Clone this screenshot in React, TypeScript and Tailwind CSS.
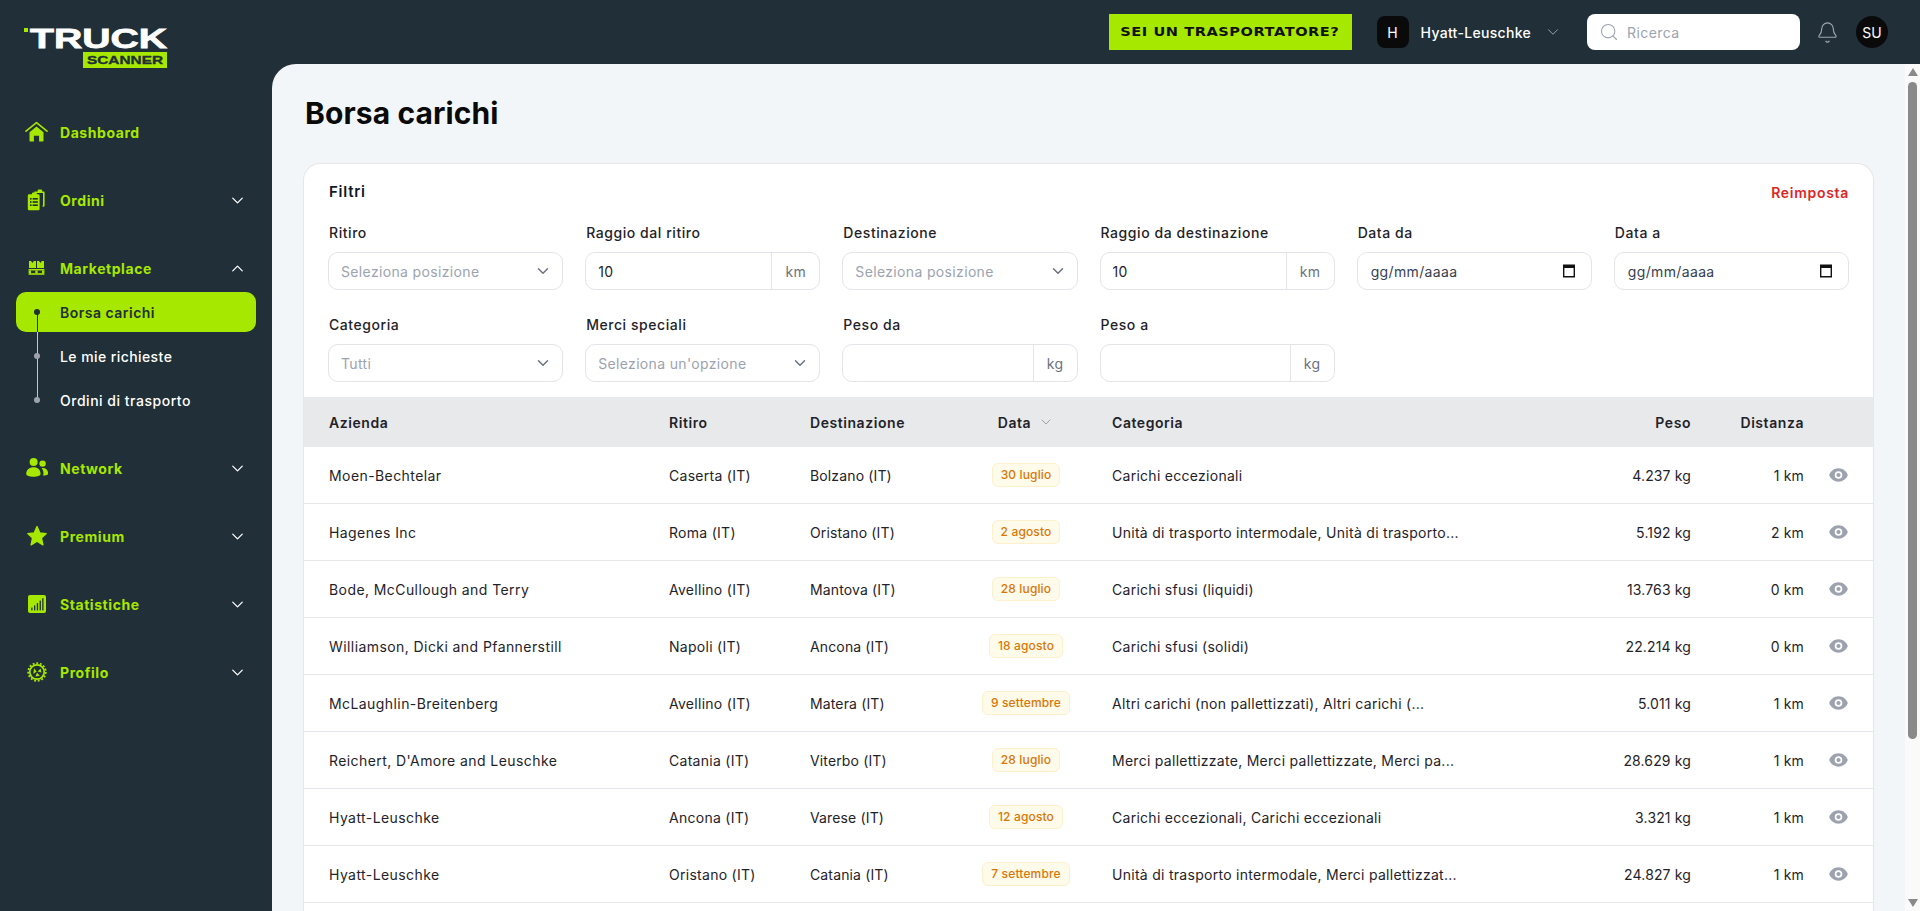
import React from "react";
import { ChevronDown, ChevronUp, Search, Bell } from "lucide-react";

const Lime = "#a6e800";

function HomeIcon() {
  return (
    <svg viewBox="0 0 24 24" className="w-[24px] h-[24px]" fill={Lime}>
      <path d="M2 11.2 12.5 2.6 23 11.2" fill="none" stroke={Lime} strokeWidth="1.6" strokeLinecap="round" strokeLinejoin="round" />
      <path d="M5.5 12.2 12.5 6.4l7 5.8v8.2a1.2 1.2 0 0 1-1.2 1.2H15.1v-5.8H9.9v5.8H6.7a1.2 1.2 0 0 1-1.2-1.2z" />
    </svg>
  );
}
function OrdersIcon() {
  return (
    <svg viewBox="0 0 24 24" className="w-[24px] h-[24px]" fill={Lime}>
      <path d="M10.4 3.4h3.2V2.6a1 1 0 0 1 1-1h2.6a1 1 0 0 1 1 1v.8h1.4a1 1 0 0 1 1 1v13.4a1 1 0 0 1-1 1h-1v-1.6h.4V5H10.4z" />
      <path d="M5 6.2h3V5.4a1 1 0 0 1 1-1h2.8a1 1 0 0 1 1 1v.8h1.6a1.2 1.2 0 0 1 1.2 1.2v13.6a1.2 1.2 0 0 1-1.2 1.2H5a1.2 1.2 0 0 1-1.2-1.2V7.4A1.2 1.2 0 0 1 5 6.2z" />
      <g fill="#202f38">
        <rect x="6" y="10" width="1.6" height="1.6" />
        <rect x="8.6" y="10" width="5.2" height="1.6" />
        <rect x="6" y="13.2" width="1.6" height="1.6" />
        <rect x="8.6" y="13.2" width="5.2" height="1.6" />
        <rect x="6" y="16.4" width="1.6" height="1.6" />
        <rect x="8.6" y="16.4" width="5.2" height="1.6" />
      </g>
    </svg>
  );
}
function PalletIcon() {
  return (
    <svg viewBox="0 0 24 24" className="w-[24px] h-[24px]" fill={Lime}>
      <path d="M5 5h2l1.4 2L9.8 5H12v7H5z" />
      <path d="M13 5h2l1.4 2L17.8 5H20v7h-7z" />
      <rect x="4.6" y="13" width="15.8" height="1.5" />
      <rect x="4.6" y="17.2" width="15.8" height="1.6" />
      <rect x="4.6" y="14.5" width="2.4" height="2.7" />
      <rect x="11.3" y="14.5" width="2.4" height="2.7" />
      <rect x="18" y="14.5" width="2.4" height="2.7" />
    </svg>
  );
}
function UsersIcon() {
  return (
    <svg viewBox="0 0 24 24" className="w-[24px] h-[24px]" fill={Lime}>
      <circle cx="9.6" cy="6" r="4" />
      <circle cx="18.6" cy="7.6" r="3.2" />
      <path d="M2.2 17.8c0-4 3.2-6.6 7.4-6.6s7 2.6 7 6.6c0 2-3 3-7.2 3s-7.2-1-7.2-3z" />
      <path d="M17.6 12.2c3.6-.8 6.4 1.6 6.6 5.2.1 1.4-2 2-5.4 2 .5-.6.7-1.2.7-2 0-2-.7-3.8-1.9-5.2z" />
    </svg>
  );
}
function StarIcon() {
  return (
    <svg viewBox="0 0 24 24" className="w-[24px] h-[24px]" fill={Lime} stroke={Lime} strokeWidth="1.4" strokeLinejoin="round">
      <path d="m13 2.6 2.8 6.4 6.4.6-4.8 4.4 1.5 6.8-5.9-3.6-5.9 3.6 1.5-6.8-4.8-4.4 6.4-.6z" />
    </svg>
  );
}
function StatsIcon() {
  return (
    <svg viewBox="0 0 24 24" className="w-[24px] h-[24px]">
      <rect x="4" y="3" width="18" height="18" rx="2" fill={Lime} />
      <g fill="#202f38">
        <rect x="7.2" y="15.6" width="1.3" height="2.8" />
        <rect x="10" y="13.4" width="1.3" height="5" />
        <rect x="12.8" y="11" width="1.3" height="7.4" />
        <rect x="15.6" y="8.6" width="1.3" height="9.8" />
        <rect x="18.2" y="6.2" width="1.3" height="12.2" />
      </g>
    </svg>
  );
}
function GearIcon() {
  return (
    <svg viewBox="0 0 24 24" className="w-[24px] h-[24px]" fill="none" stroke={Lime}>
      <circle cx="13" cy="12" r="8.8" strokeWidth="1.8" strokeDasharray="1.9 1.78" />
      <circle cx="13" cy="12" r="7.2" strokeWidth="1.7" />
      <path d="M10 8.2 12.6 11.6 9.4 14zM13.6 11.4 16.6 8.4 17.4 12.6zM13 12.8 15.8 15.8 11.4 16.4z" fill={Lime} stroke="none" />
    </svg>
  );
}
function CalIcon() {
  return (
    <svg viewBox="0 0 14 14" className="w-[14px] h-[14px]">
      <path d="M1.7 1.2h10.6v11.6H1.7z" fill="none" stroke="#111" strokeWidth="1.4" />
      <rect x="1" y="1" width="12" height="3" fill="#111" />
    </svg>
  );
}
function EyeIcon() {
  return (
    <svg viewBox="0 0 20 14" className="w-[19px] h-[14px]" fill="#9ca3af">
      <path fillRule="evenodd" d="M10 0c4.6 0 8.3 3 9.8 7-1.5 4-5.2 7-9.8 7S1.7 11 .2 7C1.7 3 5.4 0 10 0zm0 3a4 4 0 1 0 0 8 4 4 0 0 0 0-8zm0 1.8a2.2 2.2 0 1 1 0 4.4 2.2 2.2 0 0 1 0-4.4z" />
    </svg>
  );
}

function Logo() {
  return (
    <svg viewBox="0 -4 150 48" className="w-[150px] h-[48px]">
      <rect x="0" y="2" width="4" height="4" fill={Lime} />
      <text x="6" y="22" fontFamily="'Liberation Sans',sans-serif" fontWeight="700" fontSize="28" fill="#fff" stroke="#fff" strokeWidth=".8" textLength="137" lengthAdjust="spacingAndGlyphs">TRUCK</text>
      <rect x="59" y="26" width="84" height="16" fill={Lime} />
      <text x="63" y="38" fontFamily="'Liberation Sans',sans-serif" fontWeight="700" fontSize="11.5" fill="#202f38" stroke="#202f38" strokeWidth=".35" textLength="76" lengthAdjust="spacingAndGlyphs">SCANNER</text>
    </svg>
  );
}

function NavItem({ icon, label, open, chevron = true }: { icon: React.ReactNode; label: string; open?: boolean; chevron?: boolean }) {
  return (
    <div className="h-10 flex items-center pl-[24px] pr-[25px]">
      <span className="w-[24px] h-[24px] shrink-0">{icon}</span>
      <span className="ml-[12px] flex-1 text-[14px] font-bold tracking-[0.04em] text-[#a6e800]">{label}</span>
      {chevron && (open ? <ChevronUp size={19} strokeWidth={1.6} className="text-white" /> : <ChevronDown size={19} strokeWidth={1.6} className="text-white" />)}
    </div>
  );
}

function Sidebar() {
  return (
    <aside className="w-[272px] shrink-0 flex flex-col gap-7 pt-[48px] overflow-hidden">
      <NavItem icon={<HomeIcon />} label="Dashboard" chevron={false} />
      <NavItem icon={<OrdersIcon />} label="Ordini" />
      <div>
        <NavItem icon={<PalletIcon />} label="Marketplace" open />
        <div className="relative mt-1 flex flex-col gap-1 px-4">
          <span className="absolute left-[36.5px] top-[20px] h-[20px] w-px bg-[#202f38] z-10" />
          <span className="absolute left-[36.5px] top-[40px] h-[68px] w-px bg-[#c4c7cb]" />
          <div className="relative h-10 rounded-[10px] bg-[#a6e800] flex items-center pl-[44px] text-[14px] font-semibold tracking-[0.035em] text-[#202f38]">
            <span className="absolute left-[18px] top-[17px] w-[6px] h-[6px] rounded-full bg-[#202f38]" />
            Borsa carichi
          </div>
          <div className="relative h-10 flex items-center pl-[44px] text-[14px] font-medium tracking-[0.03em] text-white">
            <span className="absolute left-[18px] top-[17px] w-[6px] h-[6px] rounded-full bg-[#9ca3af]" />
            Le mie richieste
          </div>
          <div className="relative h-10 flex items-center pl-[44px] text-[14px] font-medium tracking-[0.037em] text-white">
            <span className="absolute left-[18px] top-[17px] w-[6px] h-[6px] rounded-full bg-[#9ca3af]" />
            Ordini di trasporto
          </div>
        </div>
      </div>
      <NavItem icon={<UsersIcon />} label="Network" />
      <NavItem icon={<StarIcon />} label="Premium" />
      <NavItem icon={<StatsIcon />} label="Statistiche" />
      <NavItem icon={<GearIcon />} label="Profilo" />
    </aside>
  );
}

function Header() {
  return (
    <header className="h-16 shrink-0 flex items-center pr-8">
      <div className="ml-[24px] mt-[28px]"><Logo /></div>
      <div className="ml-auto flex items-center">
        <button className="h-9 w-[243px] bg-[#a6e800] text-[#111] text-[13px] font-bold font-['DejaVu_Sans',sans-serif] whitespace-nowrap flex items-center justify-center">
          <span className="inline-block scale-x-[1.12] tracking-[0.5px]">SEI UN TRASPORTATORE?</span>
        </button>
        <span className="ml-[25px] w-8 h-8 rounded-lg bg-[#0a0a0a] flex items-center justify-center text-white text-[14px]">H</span>
        <span className="ml-3 text-white text-[14px] font-medium tracking-[0.022em] whitespace-nowrap">Hyatt-Leuschke</span>
        <ChevronDown size={18} strokeWidth={1.3} className="ml-[13px] text-[#9ca3af]" />
        <div className="ml-[25px] w-[213px] h-9 rounded-lg bg-white flex items-center pl-[12px]">
          <Search size={20} strokeWidth={1.3} className="text-[#9ca3af]" />
          <span className="ml-[8px] text-[14px] tracking-[0.03em] text-[#9ca3af]">Ricerca</span>
        </div>
        <Bell size={23} strokeWidth={1.2} className="ml-[16px] text-[#a1a6ad]" />
        <span className="ml-[17px] w-8 h-8 rounded-full bg-[#0a0a0a] flex items-center justify-center text-white text-[14px]">SU</span>
      </div>
    </header>
  );
}

function Field({ label, children }: { label: string; children: React.ReactNode }) {
  return (
    <div>
      <label className="block text-[14px] leading-5 font-medium tracking-[0.04em] text-[#1f2329] pl-px">{label}</label>
      <div className="mt-[9px]">{children}</div>
    </div>
  );
}
const box = "h-[38px] rounded-[10px] border border-[#e2e4e8] bg-white flex items-center text-[14px] tracking-[0.025em]";
function SelectBox({ text }: { text: string }) {
  return (
    <div className={box + " pl-[12px] pr-[10px] justify-between text-[#9ca3af]"}>
      <span className="whitespace-nowrap">{text}</span>
      <ChevronDown size={18} strokeWidth={2} className="text-[#6b7280]" />
    </div>
  );
}
function UnitBox({ value, unit }: { value?: string; unit: string }) {
  return (
    <div className={box + " text-[#1f2329] overflow-hidden"}>
      <input readOnly value={value ?? ""} className="flex-1 min-w-0 h-full pl-[12px] outline-none bg-transparent" />
      <span className={"h-full flex items-center justify-center border-l border-[#e2e4e8] text-[#6b7280] " + (unit === "km" ? "w-12" : "w-11")}>{unit}</span>
    </div>
  );
}
function DateBox() {
  return (
    <div className={box + " pl-[13px] pr-[15px] justify-between text-[#374151]"}>
      <span>gg/mm/aaaa</span>
      <CalIcon />
    </div>
  );
}

const rows = [
  ["Moen-Bechtelar", "Caserta (IT)", "Bolzano (IT)", "30 luglio", "Carichi eccezionali", "4.237 kg", "1 km"],
  ["Hagenes Inc", "Roma (IT)", "Oristano (IT)", "2 agosto", "Unità di trasporto intermodale, Unità di trasporto...", "5.192 kg", "2 km"],
  ["Bode, McCullough and Terry", "Avellino (IT)", "Mantova (IT)", "28 luglio", "Carichi sfusi (liquidi)", "13.763 kg", "0 km"],
  ["Williamson, Dicki and Pfannerstill", "Napoli (IT)", "Ancona (IT)", "18 agosto", "Carichi sfusi (solidi)", "22.214 kg", "0 km"],
  ["McLaughlin-Breitenberg", "Avellino (IT)", "Matera (IT)", "9 settembre", "Altri carichi (non pallettizzati), Altri carichi (...", "5.011 kg", "1 km"],
  ["Reichert, D'Amore and Leuschke", "Catania (IT)", "Viterbo (IT)", "28 luglio", "Merci pallettizzate, Merci pallettizzate, Merci pa...", "28.629 kg", "1 km"],
  ["Hyatt-Leuschke", "Ancona (IT)", "Varese (IT)", "12 agosto", "Carichi eccezionali, Carichi eccezionali", "3.321 kg", "1 km"],
  ["Hyatt-Leuschke", "Oristano (IT)", "Catania (IT)", "7 settembre", "Unità di trasporto intermodale, Merci pallettizzat...", "24.827 kg", "1 km"],
];
const cols = "grid grid-cols-[340px_141px_142px_160px_468px_111px_113px_1fr] items-center pl-[25px] pr-[25px]";

function Scrollbar() {
  return (
    <div className="w-[15px] shrink-0 bg-[#fafafa] flex flex-col items-center">
      <svg viewBox="0 0 10 8" className="w-[10px] h-[8px] mt-[4px]" fill="#8a8a8a"><path d="M5 0 10 8H0z" /></svg>
      <div className="mt-[6px] w-[9px] h-[657px] rounded-full bg-[#8a8a8a]" />
      <svg viewBox="0 0 10 8" className="w-[10px] h-[8px] mt-auto mb-[4px]" fill="#8a8a8a"><path d="M5 8 0 0h10z" /></svg>
    </div>
  );
}

export default function App() {
  return (
    <div className="h-screen flex flex-col overflow-hidden bg-[#202f38] font-['Inter',sans-serif]">
      <Header />
      <div className="flex-1 min-h-0 flex">
        <Sidebar />
        <main className="flex-1 min-w-0 overflow-hidden rounded-tl-3xl bg-[#f3f6f9] px-8 pt-[31px]">
          <h1 className="text-[30px] leading-9 font-bold tracking-[0.1px] pl-px text-[#0a0a0a]">Borsa carichi</h1>
          <section className="mt-[33px] rounded-t-2xl bg-white ring-1 ring-[#e5e7eb]">
            <div className="px-6 pt-[18px] pb-[15px]">
              <div className="flex items-center justify-between h-5 pl-px">
                <span className="pt-px text-[15px] font-semibold tracking-[0.05em] text-[#111827]">Filtri</span>
                <span className="text-[14px] font-semibold tracking-[0.05em] text-[#dc2626]">Reimposta</span>
              </div>
              <div className="mt-[21px] grid grid-cols-6 gap-x-[22px] gap-y-[25px]">
                <Field label="Ritiro"><SelectBox text="Seleziona posizione" /></Field>
                <Field label="Raggio dal ritiro"><UnitBox value="10" unit="km" /></Field>
                <Field label="Destinazione"><SelectBox text="Seleziona posizione" /></Field>
                <Field label="Raggio da destinazione"><UnitBox value="10" unit="km" /></Field>
                <Field label="Data da"><DateBox /></Field>
                <Field label="Data a"><DateBox /></Field>
                <Field label="Categoria"><SelectBox text="Tutti" /></Field>
                <Field label="Merci speciali"><SelectBox text="Seleziona un'opzione" /></Field>
                <Field label="Peso da"><UnitBox unit="kg" /></Field>
                <Field label="Peso a"><UnitBox unit="kg" /></Field>
              </div>
            </div>
            <div className={cols + " h-[50px] bg-[#e8e9eb] text-[14px] font-semibold tracking-[0.04em] text-[#1f2329]"}>
              <span>Azienda</span>
              <span>Ritiro</span>
              <span>Destinazione</span>
              <span className="pr-3 flex items-center justify-center gap-[7px]">Data <ChevronDown size={16} strokeWidth={1.5} className="text-[#9ca3af]" /></span>
              <span>Categoria</span>
              <span className="text-right">Peso</span>
              <span className="text-right">Distanza</span>
              <span />
            </div>
            {rows.map((r, i) => (
              <div key={i} className={cols + " h-[57px] border-b border-[#e5e7eb] text-[14px] tracking-[0.01em] text-[#1f2329] whitespace-nowrap"}>
                <span className="tracking-[0.03em]">{r[0]}</span>
                <span className="tracking-[0.02em]">{r[1]}</span>
                <span>{r[2]}</span>
                <span className="pr-3 flex justify-center">
                  <span className="h-6 px-2 flex items-center rounded-md border border-[#fdf0cd] bg-[#fffbeb] text-[12px] font-medium text-[#d97706]">{r[3]}</span>
                </span>
                <span className="tracking-[0.02em]">{r[4]}</span>
                <span className="text-right">{r[5]}</span>
                <span className="text-right">{r[6]}</span>
                <span className="flex justify-end"><EyeIcon /></span>
              </div>
            ))}
            <div className="h-[57px]" />
          </section>
        </main>
        <Scrollbar />
      </div>
    </div>
  );
}
